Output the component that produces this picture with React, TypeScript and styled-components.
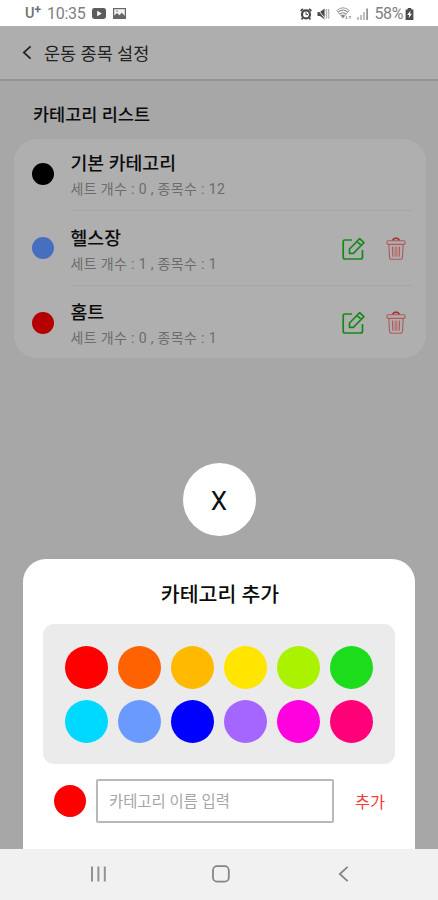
import React from "react";
import styled, { createGlobalStyle } from "styled-components";

const GlobalStyle = createGlobalStyle`
  * { box-sizing: border-box; }
  body { margin: 0; }
  button, input { font: inherit; padding: 0; margin: 0; border: 0; background: none; outline: none; }
  svg { display: block; flex: none; }
`;

const Screen = styled.div`
  width: 438px;
  height: 900px;
  display: flex;
  flex-direction: column;
  overflow: hidden;
  background: #a7a7a7;
  color: #0c0c0c;
  font-family: Roboto, "Noto Sans CJK KR", sans-serif;
`;

const StatusBar = styled.header`
  height: 26px;
  flex: none;
  display: flex;
  align-items: center;
  padding: 1px 24px 0 25px;
  background: #fff;
  color: #808080;
  font-size: 16px;
`;

const Carrier = styled.span`
  display: flex;
  align-items: center;
  width: 22px;
  font-size: 14.5px;
  font-weight: 500;
  color: #707070;
  sup { font-size: 12px; line-height: 11px; font-weight: 700; align-self: flex-start; }
`;

const Clock = styled.span`
  width: 45px;
  letter-spacing: -0.3px;
`;

const StatusIcons = styled.div<{ $gap: number }>`
  display: flex;
  align-items: center;
  gap: ${(p) => p.$gap}px;
`;

const StatusRight = styled.div`
  margin-left: auto;
  display: flex;
  align-items: center;
  gap: 5px;
`;

const Battery = styled.span`
  display: flex;
  align-items: center;
  gap: 2px;
  letter-spacing: -0.4px;
`;

const Main = styled.main`
  position: relative;
  flex: 1;
  min-height: 0;
  display: flex;
  flex-direction: column;
`;

const TitleBar = styled.div`
  height: 55px;
  flex: none;
  display: flex;
  align-items: center;
  gap: 11px;
  padding-left: 22px;
  background: #aeaeae;
  border-bottom: 2px solid #949494;
`;

const PageTitle = styled.h1`
  margin: 0;
  padding-top: 2px;
  font-size: 17.5px;
  line-height: 24px;
  font-weight: 400;
  color: #222;
`;

const ListHeading = styled.h2`
  margin: 22px 0 12px 33px;
  font-size: 17.5px;
  line-height: 24px;
  font-weight: 500;
`;

const Card = styled.ul`
  list-style: none;
  margin: 0 12px 0 14px;
  padding: 0 14px 0 18px;
  height: 219px;
  display: flex;
  flex-direction: column;
  border-radius: 23px;
  background: #afafaf;
`;

const Row = styled.li`
  height: 74.3px;
  flex: none;
  display: flex;
  align-items: center;
  &:first-child { margin-top: -2px; }
`;

const Dot = styled.span<{ $color: string; $size: number }>`
  flex: none;
  width: ${(p) => p.$size}px;
  height: ${(p) => p.$size}px;
  border-radius: 50%;
  background: ${(p) => p.$color};
`;

const RowBody = styled.div<{ $last?: boolean }>`
  flex: 1;
  align-self: stretch;
  margin-left: 16.5px;
  padding: 15.3px 6px 0 0;
  display: flex;
  justify-content: space-between;
  border-bottom: 1px solid ${(p) => (p.$last ? "transparent" : "#a6a6a6")};
`;

const RowName = styled.div`
  font-size: 18.3px;
  line-height: 24px;
  font-weight: 500;
`;

const RowMeta = styled.div`
  margin-top: 3px;
  font-size: 14px;
  letter-spacing: 0.35px;
  line-height: 20px;
  color: #6c6c6c;
  white-space: pre;
`;

const Actions = styled.div`
  display: flex;
  gap: 21px;
  padding-top: 10px;
`;

const IconButton = styled.button`
  height: 24px;
`;

const Overlay = styled.div`
  position: absolute;
  inset: 0;
  display: flex;
  flex-direction: column;
  align-items: center;
  justify-content: flex-end;
`;

const CloseButton = styled.button`
  width: 73px;
  height: 73px;
  padding-top: 2px;
  margin-bottom: 23px;
  border-radius: 50%;
  background: #fff;
  color: #111;
  font-size: 26px;
`;

const Sheet = styled.section`
  width: 392px;
  height: 290px;
  padding: 22px 20px 0;
  border-radius: 23px 23px 0 0;
  background: #fff;
`;

const SheetTitle = styled.h2`
  margin: 0 0 15px;
  padding-left: 2px;
  font-size: 20.5px;
  line-height: 28px;
  font-weight: 500;
  text-align: center;
`;

const Palette = styled.div`
  height: 140px;
  display: grid;
  grid-template-columns: repeat(6, 43px);
  grid-auto-rows: 43px;
  column-gap: 10.2px;
  row-gap: 11px;
  justify-content: center;
  align-content: center;
  border-radius: 11px;
  background: #ebebeb;
`;

const AddRow = styled.form`
  display: flex;
  align-items: center;
  margin-top: 15px;
  padding-left: 11px;
`;

const NameInput = styled.input`
  && {
    width: 238px;
    height: 44px;
    margin-left: 10px;
    padding: 2px 11px 0;
    border: 2px solid #b9b9b9;
    border-radius: 2px;
    font-size: 15.4px;
  }
  &::placeholder { color: #a6a6a6; opacity: 1; }
`;

const AddButton = styled.button`
  margin-left: 21px;
  color: #f23c3c;
  font-size: 16.3px;
`;

const NavBar = styled.nav`
  height: 51px;
  flex: none;
  display: flex;
  align-items: center;
  justify-content: space-between;
  padding: 0 88px 2px;
  background: #f1f1f1;
`;

const EditIcon = () => (
  <svg width="23" height="24" viewBox="0 0 23 24" fill="none" stroke="#17891c" strokeWidth="1.7" strokeLinejoin="round">
    <path d="M10 3H3Q1.2 3 1.2 5V20Q1.2 22 3 22H18.5Q20.5 22 20.5 20V13" />
    <path d="M7.5 16.3V12L17.7 1.7L21.9 5.6L11.4 16.3Z M15 4.4L19.2 8.3" />
  </svg>
);

const TrashIcon = () => (
  <svg width="20" height="24" viewBox="0 0 20 24" fill="none" stroke="#b5585b" strokeWidth="1.1">
    <path d="M6.4 3.6Q7.6 1.2 10 1.2Q12.4 1.2 13.6 3.6" stroke="#a83236" strokeWidth="1.7" />
    <rect x="0.8" y="3.8" width="18.4" height="3.6" rx="1.7" />
    <path d="M2.8 7.5L3.5 20Q3.7 22.3 5.6 22.3H14.4Q16.3 22.3 16.5 20L17.2 7.5" />
    <path d="M6.4 9.5L6.8 19.7M10 9.5V19.7M13.6 9.5L13.2 19.7" />
    <path d="M8.2 9.5L8.4 19.7M11.8 9.5L11.6 19.7" opacity=".4" />
  </svg>
);

const VideoIcon = () => (
  <svg width="14" height="11" viewBox="0 0 14 11">
    <rect width="14" height="11" rx="2.4" fill="#5c5c5c" />
    <path d="M5.2 2.8L9.8 5.5L5.2 8.2Z" fill="#fff" />
  </svg>
);

const PhotoIcon = () => (
  <svg width="13" height="11" viewBox="0 0 13 11">
    <rect x=".6" y=".6" width="11.8" height="9.8" fill="#f2f2f2" stroke="#666" strokeWidth="1.2" />
    <path d="M1 10V7.8L4 5L6.4 7.2L8.8 4.8L12 8V10Z" fill="#666" />
    <circle cx="4" cy="3" r=".8" fill="#777" />
  </svg>
);

const AlarmIcon = () => (
  <svg width="12" height="12" viewBox="0 0 12 12" fill="none" stroke="#484848">
    <circle cx="6" cy="6.4" r="4" strokeWidth="2.2" />
    <path d="M.6 3L3 .9M11.4 3L9 .9M2.8 9.8L1.6 11.4M9.2 9.8L10.4 11.4" strokeWidth="1.7" />
    <path d="M6 4.2V6.6H8" />
  </svg>
);

const MuteIcon = () => (
  <svg width="13" height="12" viewBox="0 0 13 12" fill="none">
    <path d="M.5 4H3L7.6 .5V11.5L3 8H.5Z" fill="#4a4a4a" />
    <path d="M.3 .7L8.5 11.3" stroke="#fff" strokeWidth=".9" />
    <path d="M9.7 1L8.9 2.8L9.9 4.6L8.9 6.4L9.9 8.2L9 10.6M12 1L11.2 2.8L12.2 4.6L11.2 6.4L12.2 8.2L11.3 10.6" stroke="#777" strokeWidth=".8" />
  </svg>
);

const WifiIcon = () => (
  <svg width="16" height="13" viewBox="0 0 16 13" fill="none" stroke="#858585" strokeWidth="1.1">
    <path d="M.8 3.4Q7 -1.8 13.2 3.4L7 11L.8 3.4Z" strokeWidth=".8" />
    <path d="M2.6 4.7Q7 1.3 11.4 4.7M4.3 6.7Q7 4.7 9.7 6.7" />
    <path d="M6 8.4H8L7 10Z" fill="#777" />
    <path d="M10.5 9V12M9.3 10.8L10.5 12L11.7 10.8M14 12V9M12.8 10.2L14 9L15.2 10.2" strokeWidth=".7" />
  </svg>
);

const SignalIcon = () => (
  <svg width="12" height="12" viewBox="0 0 12 12">
    <path d="M0 9H2V12H0ZM3 7H5V12H3ZM6 4H8V12H6Z" fill="#c0c0c0" />
    <path d="M9.2 .5H11V12H9.2Z" fill="#959595" />
  </svg>
);

const BatteryIcon = () => (
  <svg width="9" height="12" viewBox="0 0 9 12">
    <path d="M2.7 0H6.3V1.5H8.4V12H.6V1.5H2.7Z" fill="#4b4b4b" />
    <path d="M5.5 2.6L2.2 7H4.2L3.6 10.3L7 5.8H5Z" fill="#fff" />
  </svg>
);

const BackIcon = () => (
  <svg width="11" height="16" viewBox="0 0 11 16" fill="none" stroke="#222" strokeWidth="1.7">
    <path d="M8.6 1.3L1.8 7.5L8.6 13.7" />
  </svg>
);

const RecentsIcon = () => (
  <svg width="20" height="18" viewBox="0 0 20 18" stroke="#929292" strokeWidth="2">
    <path d="M4 1.5V16.5M10.4 1.5V16.5M16.8 1.5V16.5" />
  </svg>
);

const HomeIcon = () => (
  <svg width="24" height="18" viewBox="0 0 24 18" fill="none" stroke="#858585" strokeWidth="1.8">
    <rect x="2" y="1.2" width="15.8" height="15.4" rx="4.2" />
  </svg>
);

const NavBackIcon = () => (
  <svg width="12" height="18" viewBox="0 0 12 18" fill="none" stroke="#858585" strokeWidth="1.8">
    <path d="M9.6 1.8L1.8 9L9.6 16.2" />
  </svg>
);

const categories = [
  { name: "기본 카테고리", sets: 0, items: 12, color: "#000", editable: false },
  { name: "헬스장", sets: 1, items: 1, color: "#476fc0", editable: true },
  { name: "홈트", sets: 0, items: 1, color: "#b50000", editable: true },
];

const swatches = [
  "#ff0000", "#ff6200", "#ffb900", "#ffe500", "#aaf200", "#1cdc1c",
  "#00d9ff", "#6b9aff", "#0000ff", "#a566ff", "#ff00df", "#ff0079",
];

export default function App() {
  return (
    <>
      <GlobalStyle />
      <Screen>
        <StatusBar>
          <Carrier>U<sup>+</sup></Carrier>
          <Clock>10:35</Clock>
          <StatusIcons $gap={7}>
            <VideoIcon />
            <PhotoIcon />
          </StatusIcons>
          <StatusRight>
            <StatusIcons $gap={5.5}>
              <AlarmIcon />
              <MuteIcon />
              <WifiIcon />
              <SignalIcon />
            </StatusIcons>
            <Battery>58%<BatteryIcon /></Battery>
          </StatusRight>
        </StatusBar>
        <Main>
          <TitleBar>
            <BackIcon />
            <PageTitle>운동 종목 설정</PageTitle>
          </TitleBar>
          <ListHeading>카테고리 리스트</ListHeading>
          <Card>
            {categories.map((c, i) => (
              <Row key={c.name}>
                <Dot $color={c.color} $size={22} />
                <RowBody $last={i === categories.length - 1}>
                  <div>
                    <RowName>{c.name}</RowName>
                    <RowMeta>{`세트 개수 : ${c.sets} , 종목수 : ${c.items}`}</RowMeta>
                  </div>
                  {c.editable && (
                    <Actions>
                      <IconButton aria-label="수정"><EditIcon /></IconButton>
                      <IconButton aria-label="삭제"><TrashIcon /></IconButton>
                    </Actions>
                  )}
                </RowBody>
              </Row>
            ))}
          </Card>
          <Overlay>
            <CloseButton>X</CloseButton>
            <Sheet>
              <SheetTitle>카테고리 추가</SheetTitle>
              <Palette>
                {swatches.map((s) => <Dot key={s} $color={s} $size={43} />)}
              </Palette>
              <AddRow>
                <Dot $color="#ff0000" $size={32} />
                <NameInput placeholder="카테고리 이름 입력" />
                <AddButton type="button">추가</AddButton>
              </AddRow>
            </Sheet>
          </Overlay>
        </Main>
        <NavBar>
          <RecentsIcon />
          <HomeIcon />
          <NavBackIcon />
        </NavBar>
      </Screen>
    </>
  );
}
